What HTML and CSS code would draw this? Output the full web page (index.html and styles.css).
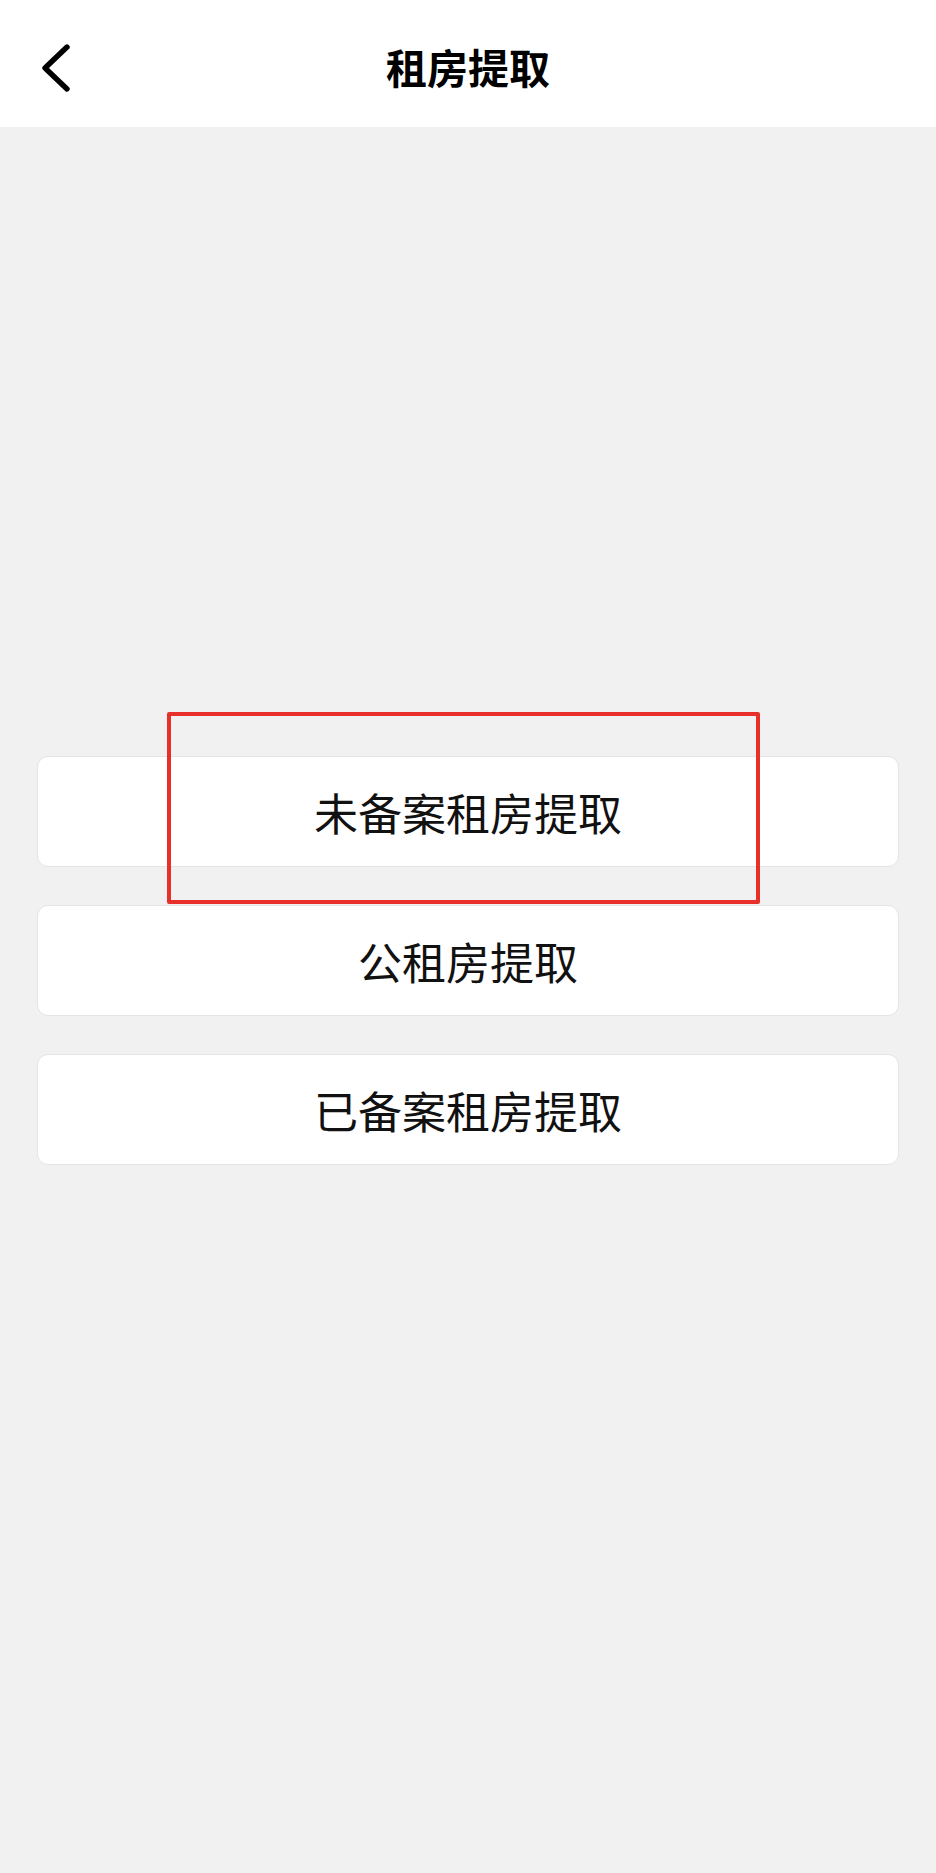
FILE: index.html
```html
<!DOCTYPE html>
<html lang="zh-CN">
<head>
    <meta charset="UTF-8">
    <meta name="viewport" content="width=device-width, initial-scale=1.0">
    <title>租房提取</title>
    <link rel="stylesheet" href="styles.css">
</head>
<body>

<header class="topbar">
    <a class="back" href="#" aria-label="返回">
        <svg width="34" height="52" viewBox="0 0 34 52">
            <polyline points="28,5 6,26 28,47" fill="none" stroke="#000" stroke-width="5.4" stroke-linecap="round" stroke-linejoin="round"/>
        </svg>
    </a>
    <h1 class="title">租房提取</h1>
    <span></span>
</header>

<main class="content">
    <ul class="options">
        <li class="option">
            未备案租房提取
            <span class="mark"></span>
        </li>
        <li class="option">公租房提取</li>
        <li class="option">已备案租房提取</li>
    </ul>
</main>

</body>
</html>
```

FILE: styles.css
```css
body {
    font-family: "Noto Sans CJK SC", "Noto Sans", sans-serif;
    background-color: #f1f1f1;
    margin: 0;
    padding: 0;
    min-height: 1873px;
}
.topbar {
    display: grid;
    grid-template-columns: 1fr auto 1fr;
    align-items: center;
    height: 127px;
    background: #fff;
}
.back {
    display: flex;
    align-items: center;
    padding-left: 39px;
    padding-top: 8px;
}
.title {
    margin: 0;
    padding-top: 4px;
    font-size: 41px;
    font-weight: 700;
    color: #000;
}
.content {
    padding: 629px 37px 0;
}
.options {
    list-style: none;
    margin: 0;
    padding: 0;
    display: flex;
    flex-direction: column;
    gap: 38px;
}
.option {
    position: relative;
    height: 109px;
    display: flex;
    align-items: center;
    justify-content: center;
    background: #fff;
    border: 1px solid #e4e4e4;
    border-radius: 11px;
    font-size: 44px;
    color: #111;
}
.mark {
    position: absolute;
    left: 129px;
    top: -45px;
    width: 585px;
    height: 184px;
    border: 4px solid #e8302a;
    border-radius: 2px;
}
```
